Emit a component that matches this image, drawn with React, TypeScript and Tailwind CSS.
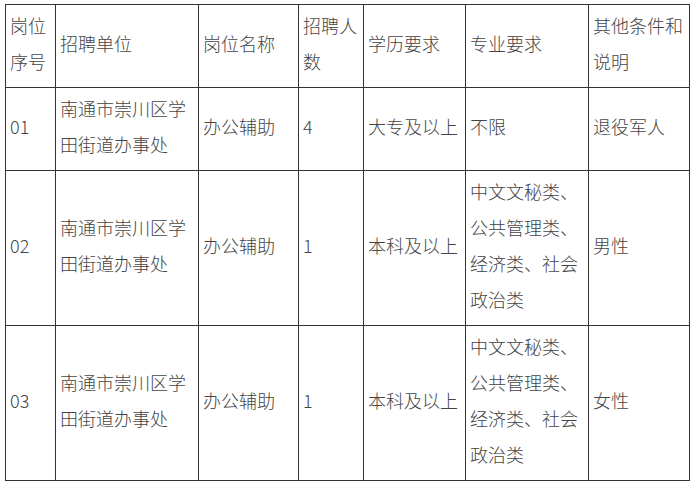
const headers = ["岗位序号", "招聘单位", "岗位名称", "招聘人数", "学历要求", "专业要求", "其他条件和说明"]

const rows = [
  ["01", "南通市崇川区学田街道办事处", "办公辅助", "4", "大专及以上", "不限", "退役军人"],
  ["02", "南通市崇川区学田街道办事处", "办公辅助", "1", "本科及以上", "中文文秘类、公共管理类、经济类、社会政治类", "男性"],
  ["03", "南通市崇川区学田街道办事处", "办公辅助", "1", "本科及以上", "中文文秘类、公共管理类、经济类、社会政治类", "女性"],
]

const widths = ["w-[50px]", "w-[143px]", "w-[100px]", "w-[65px]", "w-[102px]", "w-[123px]", "w-[101px]"]

export default function App() {
  return (
    <div className="min-h-screen bg-white pl-[5px] pt-[4px] font-['Noto_Sans_CJK_SC',sans-serif] text-[18px] font-light text-[#444]">
      <table className="w-[685px] table-fixed border-collapse">
        <colgroup>
          {widths.map((w, i) => (
            <col key={i} className={w} />
          ))}
        </colgroup>
        <tbody>
          <tr>
            {headers.map((h) => (
              <td key={h} className="border border-[#333] px-[4px] pt-[2px] pb-[8px] align-middle leading-[36px]">
                {h}
              </td>
            ))}
          </tr>
          {rows.map((r, idx) => (
            <tr key={idx}>
              {r.map((c, i) => (
                <td key={i} className="border border-[#333] px-[4px] pt-[2px] pb-[8px] align-middle leading-[36px] break-all">
                  {c}
                </td>
              ))}
            </tr>
          ))}
        </tbody>
      </table>
    </div>
  )
}
